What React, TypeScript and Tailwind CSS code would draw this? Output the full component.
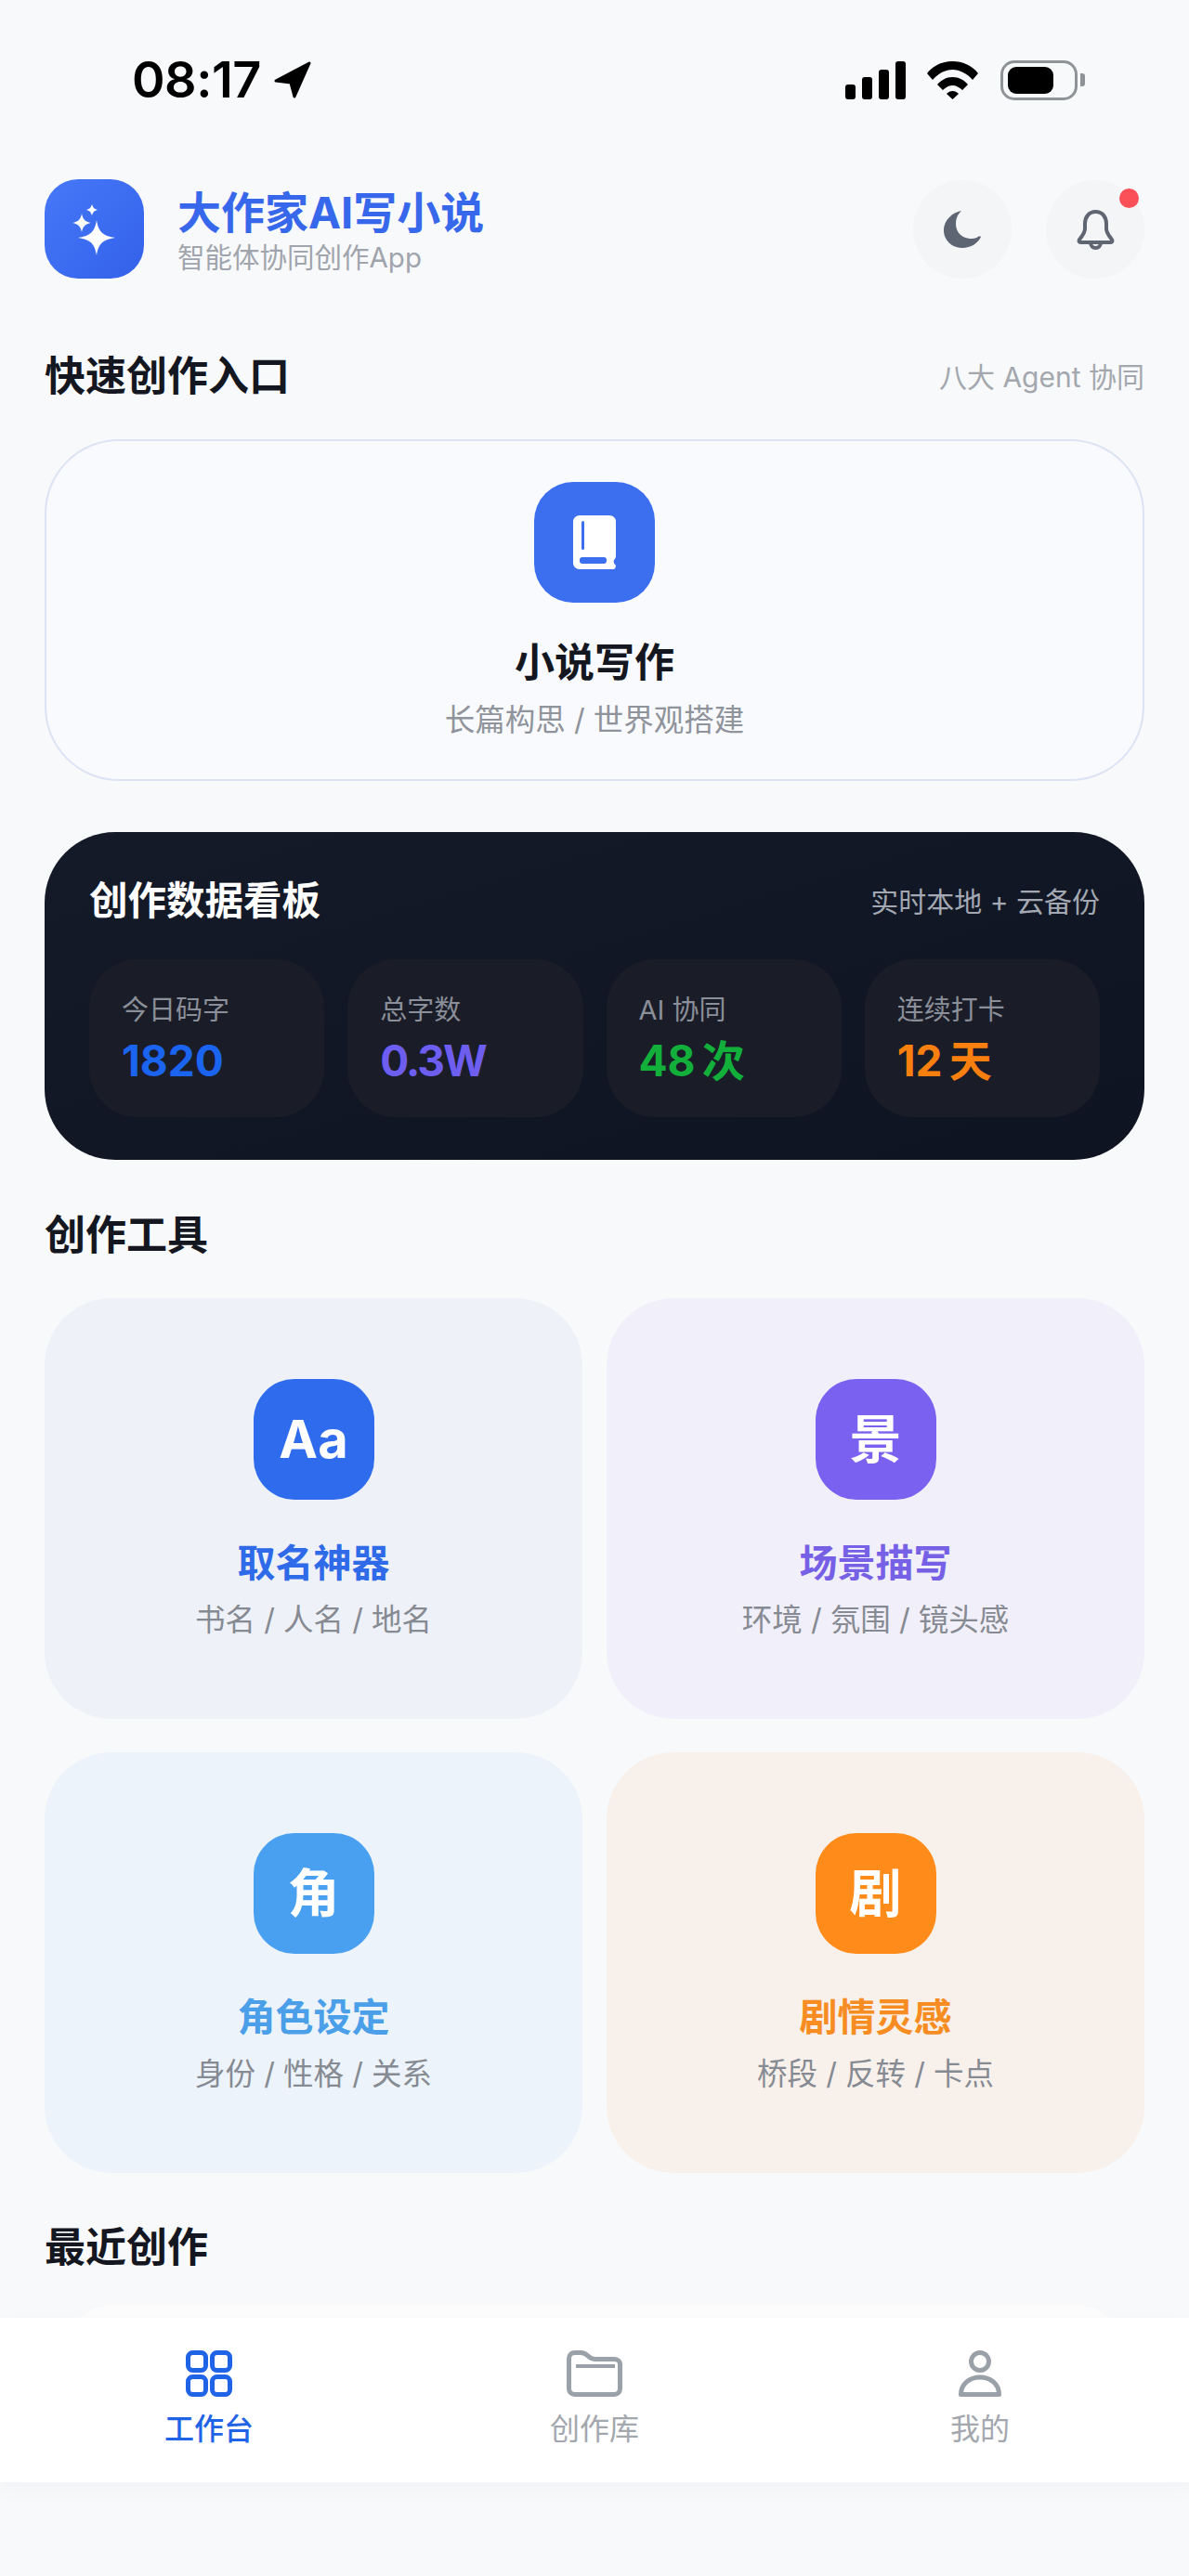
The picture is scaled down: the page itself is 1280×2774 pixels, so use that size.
const tools = [
  { title: "取名神器", sub: "书名 / 人名 / 地名", glyph: "Aa", bg: "bg-[#eef1f8]", icon: "bg-[#2f6bed]", text: "text-[#2f6ae8]" },
  { title: "场景描写", sub: "环境 / 氛围 / 镜头感", glyph: "景", bg: "bg-[#f1eff9]", icon: "bg-[#7b61f0]", text: "text-[#7660e6]" },
  { title: "角色设定", sub: "身份 / 性格 / 关系", glyph: "角", bg: "bg-[#ecf3fb]", icon: "bg-[#4aa0f0]", text: "text-[#4a9fe8]" },
  { title: "剧情灵感", sub: "桥段 / 反转 / 卡点", glyph: "剧", bg: "bg-[#f8f1eb]", icon: "bg-[#ff8c1a]", text: "text-[#f78d22]" },
];

const stats = [
  { label: "今日码字", value: "1820", color: "text-[#1a64f0]" },
  { label: "总字数", value: "0.3W", color: "text-[#6e5ef0] tracking-[-2px]" },
  { label: "AI 协同", value: "48\u2009次", color: "text-[#12b03a]" },
  { label: "连续打卡", value: "12\u2009天", color: "text-[#f97f0f]" },
];

function StatusBar() {
  return (
    <div className="flex h-[44px] items-center justify-between pl-[142px] pr-[112px]">
      <div className="flex items-center gap-[13px]">
        <span className="text-[54px] leading-[44px] font-semibold tracking-[-0.5px] text-black">08:17</span>
        <svg width="41" height="41" viewBox="0 0 41 41" fill="black" stroke="black" strokeWidth="3" strokeLinejoin="round">
          <path d="M3 21 L39 2 L23 38 L19 23 Z" />
        </svg>
      </div>
      <div className="flex items-center">
        <div className="flex h-[41px] items-end gap-[7px]">
          <div className="h-[16px] w-[11px] rounded-[3px] bg-black" />
          <div className="h-[24px] w-[11px] rounded-[3px] bg-black" />
          <div className="h-[32px] w-[11px] rounded-[3px] bg-black" />
          <div className="h-[41px] w-[11px] rounded-[3px] bg-black" />
        </div>
        <svg className="ml-[22px]" width="57" height="41" viewBox="0 0 57 41" fill="black">
          <path d="M1 13 C8 4 18 0 28.5 0 C39 0 49 4 56 13 L50 20 C44 13 36 9 28.5 9 C21 9 13 13 7 20 Z" />
          <path d="M12 25 C16 20 22 17 28.5 17 C35 17 41 20 45 25 L39 31 C36 28 32 26 28.5 26 C25 26 21 28 18 31 Z" />
          <path d="M22 35 C24 33 26 32 28.5 32 C31 32 33 33 35 35 L28.5 41 Z" />
        </svg>
        <div className="ml-[23px] flex h-[43px] w-[83px] items-center rounded-[15px] border-[3px] border-[#8f9296] pl-[5px]">
          <div className="h-[29px] w-[49px] rounded-[9px] bg-black" />
        </div>
        <div className="ml-[3px] h-[14px] w-[5px] rounded-r-[3px] bg-[#8f9296]" />
      </div>
    </div>
  );
}

function Header() {
  return (
    <div className="mt-[85px] flex h-[107px] items-center px-[48px]">
      <div className="h-[107px] w-[107px] shrink-0 rounded-[36px] bg-gradient-to-br from-[#4678f8] to-[#3361ea]">
        <svg width="107" height="107" viewBox="0 0 107 107" fill="white">
          <path d="M56 44 C58 56 62 61 76 63 C62 65 58 70 56 82 C54 70 50 65 36 63 C50 61 54 56 56 44 Z" />
          <path d="M40 37 C41 43 44 46 50 47 C44 48 41 51 40 57 C39 51 36 48 30 47 C36 46 39 43 40 37 Z" />
          <path d="M51 27 C52 30 53 32 57 33 C53 34 52 36 51 39 C50 36 49 34 45 33 C49 32 50 30 51 27 Z" />
        </svg>
      </div>
      <div className="ml-[36px] flex flex-col pt-[3px]">
        <div className="text-[47px] leading-[54px] font-bold text-[#3767ea]">大作家AI写小说</div>
        <div className="mt-[3px] text-[29.5px] leading-[36px] text-[#a0a4ac]">智能体协同创作App</div>
      </div>
      <div className="ml-auto flex items-center gap-[37px]">
        <div className="flex h-[106px] w-[106px] items-center justify-center rounded-full bg-[#f4f5f7]">
          <svg width="42" height="42" viewBox="0 0 42 42" fill="#5d6572">
            <path d="M20 1 C10 3 1 11 1 22 C1 33 10 41 21 41 C30 41 38 36 41 29 C40 28 39 28 38 29 C35 31 32 31 29 31 C19 30 14 23 14 15 C14 9 16 5 20 1 Z" />
          </svg>
        </div>
        <div className="relative flex h-[106px] w-[106px] items-center justify-center rounded-full bg-[#f4f5f7]">
          <svg width="41" height="44" viewBox="0 0 41 44" fill="none" stroke="#5f6672" strokeWidth="4" strokeLinejoin="round">
            <path d="M20.5 3 C13 3 9 9 9 16 V21 C9 26 6 29 3 33 C2 35 3 36 5 36 H36 C38 36 39 35 38 33 C35 29 32 26 32 21 V16 C32 9 28 3 20.5 3 Z" />
            <path d="M15 36 C15 44 26 44 26 36" />
          </svg>
          <div className="absolute right-[6px] top-[9px] h-[21px] w-[21px] rounded-full bg-[#fb5058]" />
        </div>
      </div>
    </div>
  );
}

function NovelCard() {
  return (
    <div className="mx-[48px] mt-[44px] flex h-[368px] flex-col items-center rounded-[80px] border-2 border-[#dce3f5] bg-[#f9fafe] pt-[44px]">
      <div className="flex h-[130px] w-[130px] items-center justify-center rounded-[42px] bg-[#3b6ff0]">
        <svg width="46" height="58" viewBox="0 0 46 58">
          <path fill="white" d="M7 0 H39 C43 0 46 3 46 6 V44 C46 46 44 48 44 48 C43 50 44 52 46 54 C46 56 45 58 43 58 H7 C3 58 0 55 0 51 V7 C0 3 3 0 7 0 Z" />
          <rect fill="#3b6ff0" x="9" y="6" width="3" height="31" rx="1.5" />
          <rect fill="#3b6ff0" x="7" y="45" width="29" height="7" rx="3" />
        </svg>
      </div>
      <div className="mt-[40px] text-[43px] leading-[48px] font-bold text-[#14171f]">小说写作</div>
      <div className="mt-[19px] text-[32.5px] leading-[40px] text-[#8f939b]">长篇构思 / 世界观搭建</div>
    </div>
  );
}

function StatsBoard() {
  return (
    <div className="mx-[48px] mt-[55px] h-[353px] rounded-[76px] bg-gradient-to-br from-[#141a28] to-[#0e1422] px-[48px] pt-[48px]">
      <div className="flex items-center justify-between">
        <div className="text-[41.5px] leading-[48px] font-bold text-white">创作数据看板</div>
        <div className="pt-[3px] text-[30px] leading-[48px] text-[#a3a8b2]">实时本地 + 云备份</div>
      </div>
      <div className="mt-[38px] grid grid-cols-4 gap-[25px]">
        {stats.map((s) => (
          <div key={s.label} className="h-[170px] rounded-[52px] bg-[#1a1d28] pl-[35px] pt-[36px]">
            <div className="text-[29px] leading-[38px] text-[#8b8f99]">{s.label}</div>
            <div className={`mt-[9px] text-[46px] leading-[52px] font-bold ${s.color}`}>{s.value}</div>
          </div>
        ))}
      </div>
    </div>
  );
}

function ToolGrid() {
  return (
    <div className="mx-[48px] mt-[44px] grid grid-cols-2 gap-x-[26px] gap-y-[36px]">
      {tools.map((t) => (
        <div key={t.title} className={`flex h-[453px] flex-col items-center rounded-[72px] pt-[87px] ${t.bg}`}>
          <div className={`flex h-[130px] w-[130px] items-center justify-center rounded-[44px] text-[56px] leading-none font-bold text-white ${t.icon}`}>
            {t.glyph}
          </div>
          <div className={`mt-[44px] text-[41px] leading-[48px] font-bold ${t.text}`}>{t.title}</div>
          <div className="mt-[18px] text-[32.5px] leading-[40px] text-[#868a92]">{t.sub}</div>
        </div>
      ))}
    </div>
  );
}

function BottomNav() {
  return (
    <div className="absolute inset-x-0 bottom-[101px] grid h-[177px] grid-cols-3 bg-white px-[17.5px] pt-[35px] shadow-[0_8px_24px_rgba(30,40,60,0.03)]">
      <div className="flex flex-col items-center">
        <svg width="50" height="50" viewBox="0 0 50 50" fill="none" stroke="#1f63e6" strokeWidth="5">
          <rect x="2.5" y="2.5" width="19" height="19" rx="5" />
          <rect x="28.5" y="2.5" width="19" height="19" rx="5" />
          <rect x="2.5" y="28.5" width="19" height="19" rx="5" />
          <rect x="28.5" y="28.5" width="19" height="19" rx="5" />
        </svg>
        <div className="mt-[15px] text-[32px] leading-[40px] font-medium text-[#1f63e6]">工作台</div>
      </div>
      <div className="flex flex-col items-center">
        <svg width="60" height="50" viewBox="0 0 60 50" fill="none" stroke="#9aa1a9" strokeWidth="5" strokeLinejoin="round">
          <path d="M2.5 9 C2.5 5 5 2.5 9 2.5 H15 C19 2.5 21 4 23 6 C25 8 27 9.5 30 9.5 H51 C55 9.5 57.5 12 57.5 15 V41 C57.5 45 55 47.5 51 47.5 H9 C5 47.5 2.5 45 2.5 41 Z" />
          <path d="M10 17 H52" strokeWidth="4" />
        </svg>
        <div className="mt-[15px] text-[32px] leading-[40px] text-[#a3a7ae]">创作库</div>
      </div>
      <div className="flex flex-col items-center">
        <svg width="46" height="50" viewBox="0 0 46 50" fill="none" stroke="#9aa0a8" strokeWidth="5" strokeLinejoin="round">
          <circle cx="23" cy="12" r="9.5" />
          <path d="M2.5 47.5 C2.5 36 12 29 23 29 C34 29 43.5 36 43.5 47.5 Z" />
        </svg>
        <div className="mt-[15px] text-[32px] leading-[40px] text-[#a3a7ae]">我的</div>
      </div>
    </div>
  );
}

export default function App() {
  return (
    <div className="relative h-[2774px] w-[1280px] overflow-hidden bg-[#f8f9fb] pt-[64px] font-['Inter','Noto_Sans_CJK_SC',sans-serif]">
      <StatusBar />
      <Header />

      <div className="mt-[81px] flex h-[48px] items-center justify-between px-[48px]">
        <h2 className="text-[44px] leading-[48px] font-bold text-[#14171f]">快速创作入口</h2>
        <span className="pt-[2px] text-[30px] text-[#a3a7ae]">八大 Agent 协同</span>
      </div>
      <NovelCard />
      <StatsBoard />

      <h2 className="mt-[57px] px-[48px] text-[44px] leading-[48px] font-bold text-[#14171f]">创作工具</h2>
      <ToolGrid />

      <h2 className="mt-[56px] px-[48px] text-[44px] leading-[48px] font-bold text-[#14171f]">最近创作</h2>
      <div className="mx-[76px] mt-[39px] h-[120px] rounded-[40px] bg-[#fcfcfd]" />

      <BottomNav />
    </div>
  );
}
